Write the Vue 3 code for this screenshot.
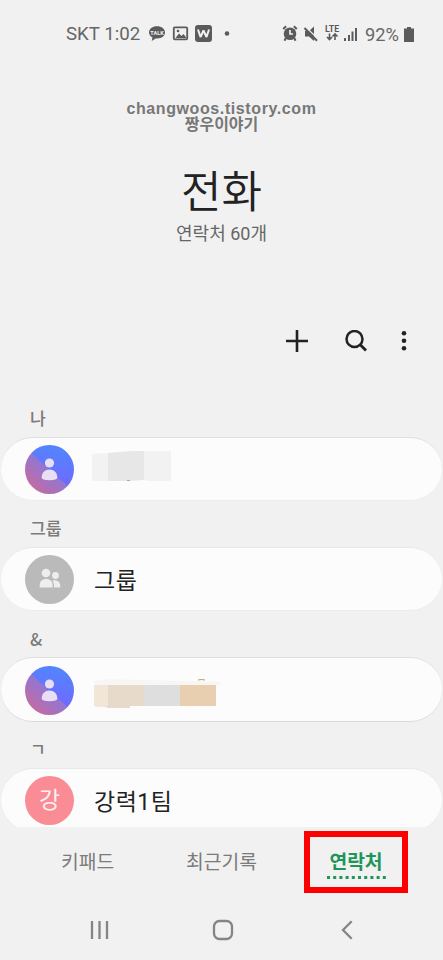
<script setup>
const sections = [
  { label: '나', kind: 'person', mask: 'grey' },
  { label: '그룹', kind: 'group', name: '그룹' },
  { label: '&', kind: 'person', mask: 'tan', lined: true },
  { label: 'ㄱ', kind: 'initial', initial: '강', name: '강력1팀' },
]
</script>

<template>
  <main class="phone">
    <header class="status">
      <span class="carrier">SKT 1:02</span>
      <svg class="notices" width="84" height="20" viewBox="0 0 84 20">
        <path d="M9 2.200C4.300 2.200 1 4.800 1 8.300c0 2.300 1.300 4.100 3.500 5.200L3.700 17l4-2.500c6 .4 9.300-2.300 9.300-6.200 0-3.500-3.300-6.100-8-6.100z" fill="#5b5b5b" />
        <text x="9" y="10.500" text-anchor="middle" font-size="5.500" font-weight="700" fill="#f1f1f1">TALK</text>
        <rect x="25.800" y="3.300" width="13.400" height="12" rx="1" fill="none" stroke="#5b5b5b" stroke-width="1.800" />
        <path d="M27.500 14l3.500-4.500 2.500 2.600 2-2 3 3.900z" fill="#5b5b5b" />
        <circle cx="30" cy="7" r="1.300" fill="#5b5b5b" />
        <rect x="47" y="1" width="17" height="17" rx="3" fill="#5b5b5b" />
        <path d="M50 5.500l2.500 7.500 3-6.500 3 6.500 2.500-7.500" fill="none" stroke="#f1f1f1" stroke-width="2" stroke-linejoin="bevel" />
        <circle cx="79" cy="9.500" r="2.300" fill="#5b5b5b" />
      </svg>
      <svg class="signals" width="78" height="20" viewBox="0 0 78 20">
        <g fill="#5b5b5b">
          <circle cx="8" cy="9.700" r="6.300" />
          <path d="M3.800 14l-1.300 2.700M12.200 14l1.300 2.700M1.200 5l3-2.800M14.800 5l-3-2.800" stroke="#5b5b5b" stroke-width="2" />
          <path d="M23 7h4l5-4.500v14.500l-5-4.500h-4z" />
          <rect x="62" y="14" width="2" height="3" /><rect x="66" y="11" width="2" height="6" />
          <rect x="69.500" y="7.500" width="2" height="9.500" /><rect x="73" y="4" width="2" height="13" />
        </g>
        <path d="M8 6v4h3" fill="none" stroke="#f1f1f1" stroke-width="1.700" />
        <path d="M24 3.200L36 15" stroke="#f1f1f1" stroke-width="1.200" />
        <path d="M22.500 4L35 16.700" fill="none" stroke="#5b5b5b" stroke-width="2" />
        <text x="50" y="7.800" text-anchor="middle" font-size="8.800" font-weight="700" fill="#5b5b5b">LTE</text>
        <path d="M47.500 9.500v6M45 13l2.500 2.500 2.500-2.500M53 16v-6M50.500 12.500l2.500-2.500 2.500 2.500" fill="none" stroke="#5b5b5b" stroke-width="1.600" />
      </svg>
      <span class="percent">92%</span>
      <svg class="battery" width="10" height="15" viewBox="0 0 10 15">
        <path d="M3 0h4v1.500h3V15H0V1.500h3z" fill="#5b5b5b" />
      </svg>
    </header>

    <div class="mark">
      <div class="site">changwoos.tistory.com</div>
      <div class="blog">짱우이야기</div>
    </div>
    <h1>전화</h1>
    <p class="count">연락처 60개</p>

    <div class="actions">
      <svg width="22" height="22" viewBox="0 0 22 22"><path d="M11 0v22M0 11h22" stroke="#222" stroke-width="2.600" /></svg>
      <svg width="22" height="22" viewBox="0 0 22 22"><g fill="none" stroke="#222" stroke-width="2.500"><circle cx="9.500" cy="9" r="8" /><path d="M15 14.500l6 6" stroke-width="2.800" /></g></svg>
      <svg width="6" height="22" viewBox="0 0 6 22"><g fill="#222"><circle cx="3" cy="3.200" r="2.300" /><circle cx="3" cy="10.700" r="2.300" /><circle cx="3" cy="18.200" r="2.300" /></g></svg>
    </div>

    <div class="list">
      <section v-for="s in sections" :key="s.label">
        <div class="label">{{ s.label }}</div>
        <div class="card" :class="{ lined: s.lined }">
          <div class="avatar" :class="s.kind">
            <svg v-if="s.kind === 'person'" width="49" height="49" viewBox="0.500 0.500 49 49">
              <g fill="#e9dff5"><circle cx="25" cy="18.500" r="4.600" /><path d="M17.200 33c0-5 3.300-8 7.800-8s7.800 3 7.800 8q0 2.800-7.800 2.800t-7.800-2.800z" /></g>
            </svg>
            <svg v-else-if="s.kind === 'group'" width="49" height="49" viewBox="0.500 0.500 49 49">
              <g fill="#eee">
                <circle cx="21.500" cy="18.500" r="4.300" /><circle cx="31" cy="21" r="3.400" />
                <path d="M15.200 33v-2c0-4 2.500-6.400 6.500-6.400s6.500 2.400 6.500 6.400v2z" />
                <path d="M29.500 33v-2c0-2-.7-3.700-1.700-4.900 4.500-1.300 8 1.200 8 5.400v1.500z" />
              </g>
            </svg>
            <span v-else>{{ s.initial }}</span>
          </div>
          <span v-if="s.name" class="name">{{ s.name }}</span>
          <svg v-else-if="s.mask === 'grey'" class="mask upper" width="130" height="40" viewBox="0 0 130 40">
            <path d="M0 13l16-1v28H0z" fill="#f2f2f2" /><path d="M16 12l23-2h13v29l-15 1H16z" fill="#e7e7e7" />
            <path d="M52 10h27v30H56l-4-1z" fill="#f2f2f2" /><path d="M35 39.500h3" stroke="#aaa" />
          </svg>
          <svg v-else class="mask" width="130" height="40" viewBox="0 0 130 40">
            <path d="M2 9l14-2 112 3v3H2z" fill="#f7f6f4" />
            <path d="M2 13h14v22H6l-4-1z" fill="#f2e6d8" /><path d="M12 34h4V13h36v21H38v2H16z" fill="#e8dacb" />
            <path d="M52 13h36v21H52z" fill="#dedede" /><path d="M88 13h36v21H88z" fill="#e8cfaf" />
            <path d="M106 8q3-1 7 0" fill="none" stroke="#c09b62" />
          </svg>
        </div>
      </section>
    </div>

    <nav class="tabs">
      <span class="tab keypad">키패드</span>
      <span class="tab recent">최근기록</span>
      <div class="selected">
        <span class="tab active">연락처</span>
        <svg width="60" height="3" viewBox="0 0 60 3"><path d="M1 1.500h59" stroke="#1d955b" stroke-width="3" stroke-dasharray="3 3.200" /></svg>
      </div>
    </nav>

    <footer class="system">
      <svg width="20" height="20" viewBox="0 0 20 20"><path d="M2 1v18M9.500 1v18M17 1v18" stroke="#858585" stroke-width="2.300" /></svg>
      <svg class="home" width="22" height="22" viewBox="0 0 22 22"><rect x="2" y="2" width="18" height="18" rx="5.500" fill="none" stroke="#858585" stroke-width="2.300" /></svg>
      <svg width="12" height="20" viewBox="0 0 12 20"><path d="M10.700 1.200L2 10l8.700 8.800" fill="none" stroke="#858585" stroke-width="2.300" /></svg>
    </footer>
  </main>
</template>

<style>
body { background: #f1f1f1; }
</style>

<style scoped>
.phone { width: 443px; height: 960px; overflow: hidden; background: #f1f1f1; color: #222; font-family: Roboto, "Noto Sans CJK KR", sans-serif; display: flex; flex-direction: column; }
svg { display: block; flex: none; }
.status { height: 68px; flex: none; box-sizing: border-box; padding-left: 66px; display: flex; align-items: center; font-size: 18.700px; color: #666; white-space: nowrap; }
.carrier { width: 82px; }
.notices, .signals { margin-top: -1px; }
.signals { margin-left: 50px; }
.percent { width: 39px; margin-left: 5px; font-size: 18.300px; }
.mark { height: 67px; flex: none; box-sizing: border-box; padding-top: 32px; text-align: center; color: #777; font-weight: 700; }
.site { font: 700 16px/17px "Liberation Sans", sans-serif; letter-spacing: 0.600px; }
.blog { font-size: 16px; line-height: 15px; }
h1 { margin: 0; height: 84px; flex: none; box-sizing: border-box; padding-top: 32px; font-size: 44px; line-height: 52px; font-weight: 350; text-align: center; }
.count { margin: 0; height: 92px; flex: none; box-sizing: border-box; padding-top: 1px; font-size: 18px; line-height: 28px; color: #666; text-align: center; }
.actions { height: 60px; flex: none; margin-top: 19px; padding: 0 36px 0 0; display: flex; justify-content: flex-end; gap: 37px; box-sizing: border-box; }
.actions svg:last-child { margin-left: -3px; }
.list { height: 437px; flex: none; overflow: hidden; }
section { height: 110.400px; }
.label { height: 46.500px; padding: 15px 0 0 30px; box-sizing: border-box; font: 500 17.200px/26px "Noto Sans CJK KR", sans-serif; color: #7b7b7b; }
.card { height: 64.500px; margin: 0 1px; box-sizing: border-box; border-top: 1px solid #e8e8e8; border-bottom: 1px solid #ececec; border-radius: 32px; background: #fcfcfc; display: flex; align-items: center; padding-left: 24px; }
.lined, section:first-child .card { border-top-color: #dedede; }
.lined { border-bottom-color: #dadada; }
.avatar { width: 49px; height: 49px; flex: none; border-radius: 50%; overflow: hidden; margin-top: 1px; }
.person { background: linear-gradient(222deg, transparent 50%, #9276d2 50.500%, #c76a9e 90%), linear-gradient(190deg, #5384fd 10%, #6a6fff 60%, #7164ff 80%); }
.group { background: #bababa; }
.initial { background: #f98c94; color: #fff0f0; font-size: 23px; line-height: 50px; text-align: center; }
.name { margin: 6px 0 0 20px; font-size: 23px; line-height: 32px; letter-spacing: 0.500px; }
.mask { margin: 4px 0 0 18px; }
.upper { margin-top: -16px; }
.tabs { height: 72px; flex: none; display: flex; color: #7b7b7b; font-size: 19.300px; box-sizing: border-box; padding-top: 4px; }
.tab { line-height: 30px; white-space: nowrap; }
.keypad { width: 54px; margin: 17px 0 0 61px; }
.recent { width: 74px; margin: 17px 0 0 71px; }
.selected { width: 104px; height: 62px; margin-left: 44px; box-sizing: border-box; border: 6px solid #f00; padding-top: 11px; display: flex; flex-direction: column; align-items: center; }
.selected svg { margin-top: -2px; }
.active { color: #1d955b; font-weight: 700; }
.system { flex: 1; display: flex; align-items: center; padding: 0 90px; justify-content: space-between; }
.home { margin-right: 5px; }
</style>
